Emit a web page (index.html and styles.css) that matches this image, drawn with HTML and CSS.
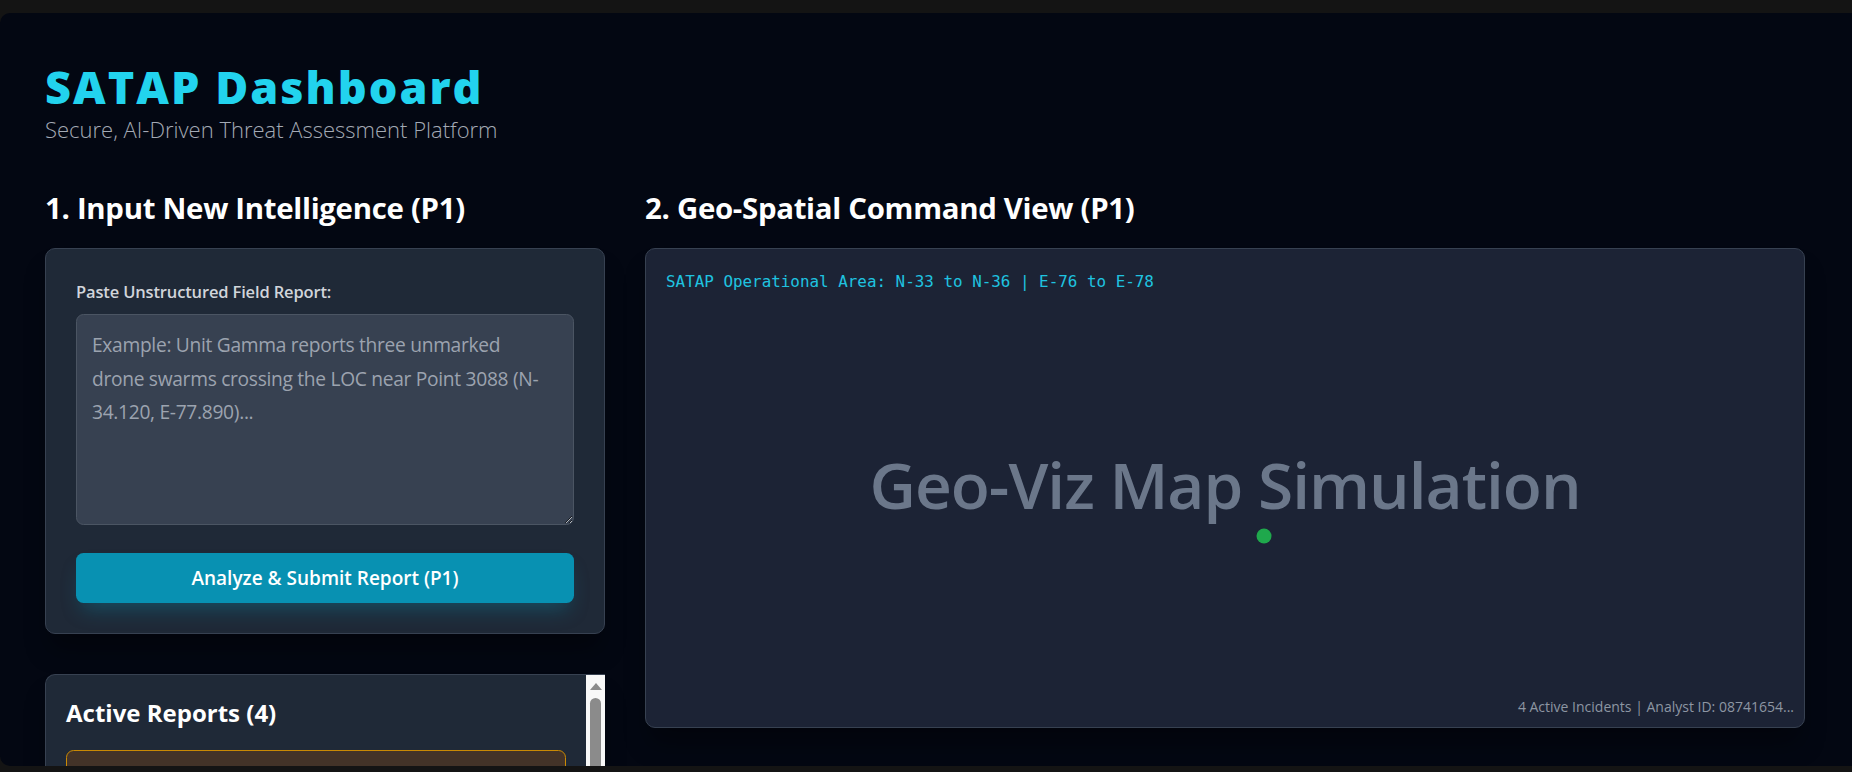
FILE: index.html
```html
<!DOCTYPE html>
<html lang="en">
<head>
<meta charset="utf-8">
<title>SATAP Dashboard</title>
<link rel="stylesheet" href="styles.css">
</head>
<body>
<div class="frame">
  <main class="page">
    <header class="header">
      <h1 class="title">SATAP Dashboard</h1>
      <p class="subtitle">Secure, AI-Driven Threat Assessment Platform</p>
    </header>

    <div class="grid">
      <section class="col-left">
        <h2 class="section-title">1. Input New Intelligence (P1)</h2>
        <div class="card input-card">
          <label class="field-label" for="report">Paste Unstructured Field Report:</label>
          <textarea id="report" class="report-input" rows="6" placeholder="Example: Unit Gamma reports three unmarked&#10;drone swarms crossing the LOC near Point 3088 (N-&#10;34.120, E-77.890)..."></textarea>
          <button class="submit-btn" type="button">Analyze &amp; Submit Report (P1)</button>
        </div>

        <div class="card reports-card">
          <div class="reports-body">
            <h3 class="reports-title">Active Reports (4)</h3>
            <article class="report report-high">
              <div class="report-head">
                <span class="report-name">Drone Swarm Incursion</span>
                <span class="badge badge-green">VERIFIED</span>
              </div>
            </article>
          </div>
          <div class="scrollbar" aria-hidden="true">
            <span class="scroll-arrow"></span>
            <span class="scroll-thumb"></span>
          </div>
        </div>
      </section>

      <section class="col-right">
        <h2 class="section-title">2. Geo-Spatial Command View (P1)</h2>
        <div class="map">
          <div class="map-area">SATAP Operational Area: N-33 to N-36 | E-76 to E-78</div>
          <div class="map-center">Geo-Viz Map Simulation</div>
          <div class="map-footer">4 Active Incidents | Analyst ID: 08741654...</div>
          <span class="pin" style="left: 53.4%; top: 60.1%;"></span>
        </div>
      </section>
    </div>
  </main>
</div>
</body>
</html>
```

FILE: styles.css
```css
* {
  box-sizing: border-box;
}

html, body {
  margin: 0;
  padding: 0;
}

body {
  background: #141414;
  height: 772px;
  overflow: hidden;
  font-family: "Open Sans", "Noto Sans", "Liberation Sans", sans-serif;
  color: #f3f4f6;
}

.frame {
  margin-top: 13px;
  height: 753px;
  background: #030712;
  border-radius: 10px 0 0 10px;
  overflow: hidden;
}

.page {
  padding: 49px 47px 0 45px;
}

.header {
  margin-bottom: 41px;
}

.title {
  margin: 0;
  font-size: 45px;
  line-height: 50px;
  font-weight: 800;
  letter-spacing: 0.045em;
  color: #22d3ee;
}

.subtitle {
  margin: 0;
  font-size: 22px;
  line-height: 35px;
  font-weight: 300;
  color: #a3aab5;
}

.grid {
  display: grid;
  grid-template-columns: 560px 1fr;
  column-gap: 40px;
  align-items: start;
}

.section-title {
  margin: 0 0 20px;
  font-size: 29.4px;
  line-height: 40px;
  font-weight: 700;
  letter-spacing: -0.3px;
  color: #ffffff;
}

.card {
  background: #1f2937;
  border: 1px solid #374151;
  border-radius: 10px;
  box-shadow: 0 20px 25px -5px rgba(0, 0, 0, 0.35);
}

.input-card {
  padding: 30px;
}

.field-label {
  display: block;
  font-size: 16.5px;
  line-height: 25px;
  font-weight: 600;
  letter-spacing: -0.15px;
  color: #d1d5db;
  margin-bottom: 10px;
}

.report-input {
  display: block;
  width: 100%;
  height: 211px;
  padding: 13px 8px 15px 15px;
  font-family: inherit;
  font-size: 19.2px;
  line-height: 33.5px;
  letter-spacing: -0.3px;
  white-space: pre;
  color: #f3f4f6;
  background: #374151;
  border: 1px solid #4b5563;
  border-radius: 7.5px;
  outline: none;
}

.report-input::placeholder {
  color: #9ca3af;
}

.submit-btn {
  display: block;
  width: 100%;
  height: 50px;
  margin-top: 28px;
  border: 0;
  border-radius: 7.5px;
  background: #0891b2;
  color: #ffffff;
  font-family: inherit;
  font-size: 19px;
  font-weight: 600;
  box-shadow: 0 12px 20px -6px rgba(8, 145, 178, 0.35);
}

.reports-card {
  display: flex;
  margin-top: 40px;
  height: 300px;
  border-right: 0;
  border-top-right-radius: 0;
  overflow: hidden;
}

.reports-body {
  flex: 1;
  min-width: 0;
  padding: 20px;
}

.scrollbar {
  flex: 0 0 19px;
  display: flex;
  flex-direction: column;
  align-items: center;
  background: #f8f8f8;
}

.scroll-arrow {
  width: 0;
  height: 0;
  margin-top: 8px;
  border-left: 6px solid transparent;
  border-right: 6px solid transparent;
  border-bottom: 7px solid #8b8b8b;
}

.scroll-thumb {
  width: 11px;
  height: 220px;
  margin-top: 8px;
  border-radius: 6px;
  background: #8b8b8b;
}

.reports-title {
  margin: 0 0 20px;
  font-size: 24px;
  line-height: 35px;
  font-weight: 700;
  color: #ffffff;
}

.report {
  padding: 15px;
  border-radius: 7.5px;
  border: 1px solid #ca8a04;
  background: #433328;
}

.report-head {
  display: flex;
  justify-content: space-between;
  align-items: flex-start;
}

.report-name {
  font-size: 20px;
  line-height: 28px;
  font-weight: 700;
  color: #fde68a;
}

.badge {
  width: 116px;
  text-align: center;
  padding: 4px 10px;
  border-radius: 999px;
  font-size: 15px;
  font-weight: 600;
}

.badge-green {
  background: #166534;
  color: #bbf7d0;
}

.map {
  position: relative;
  display: grid;
  height: 480px;
  background: #1c2335;
  border: 1px solid #374151;
  border-radius: 10px;
  box-shadow: 0 20px 25px -5px rgba(0, 0, 0, 0.35);
}

.map > div {
  grid-area: 1 / 1;
}

.map-area {
  align-self: start;
  justify-self: start;
  margin: 20px;
  font-family: "DejaVu Sans Mono", "Liberation Mono", monospace;
  font-size: 15.9px;
  line-height: 25px;
  color: #1fc3e0;
}

.map-center {
  align-self: center;
  justify-self: center;
  margin-top: -6px;
  font-size: 64px;
  line-height: 1;
  font-weight: 600;
  letter-spacing: -1px;
  color: #6b778a;
}

.map-footer {
  align-self: end;
  justify-self: end;
  margin: 10px;
  font-size: 14px;
  line-height: 20px;
  color: #8d96a3;
}

.pin {
  position: absolute;
  width: 15px;
  height: 15px;
  border-radius: 50%;
  background: #1fa84c;
  transform: translate(-50%, -50%);
}
```
